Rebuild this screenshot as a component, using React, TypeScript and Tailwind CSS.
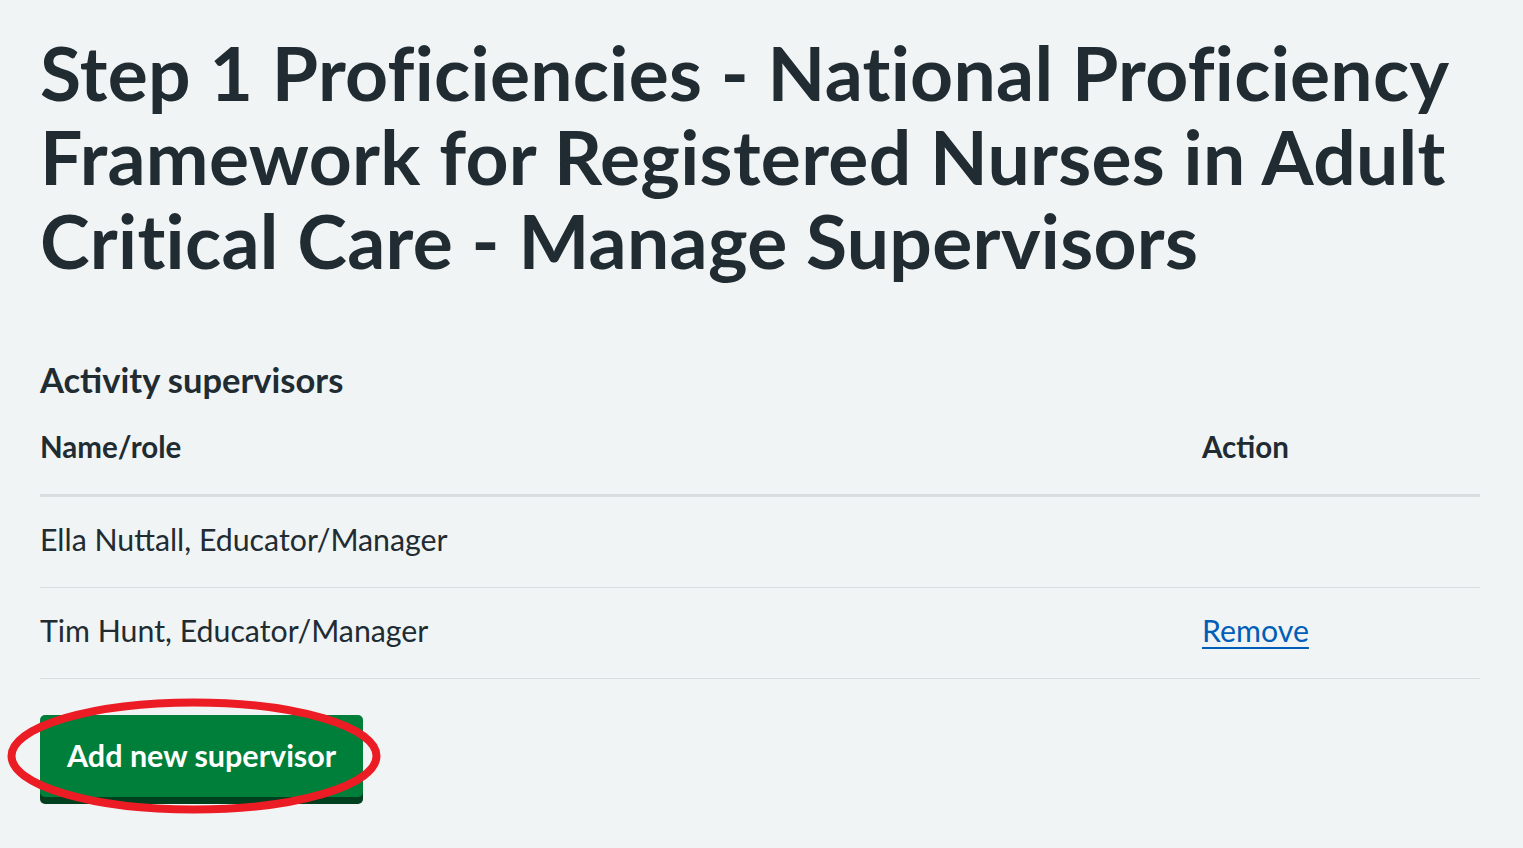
import React from "react";

export default function App() {
  return (
    <div className="min-h-screen w-full bg-[#f0f4f5] font-['Lato','Noto_Sans',sans-serif] text-[#212b32]">
      <div className="px-10 pt-[30px] pb-10 w-[1520px]">
        <h1 className="text-[75px] font-bold leading-[84px] tracking-[0.3px]">
          Step 1 Proficiencies - National Proficiency
          <br />
          Framework for Registered Nurses in Adult
          <br />
          Critical Care - Manage Supervisors
        </h1>

        <table className="mt-[77px] w-[1440px] table-fixed border-collapse text-left">
          <caption className="text-left text-[34.5px] font-bold leading-[42px]">
            Activity supervisors
          </caption>
          <colgroup>
            <col className="w-[1162px]" />
            <col />
          </colgroup>
          <thead>
            <tr className="border-b-[3px] border-[#d8dde0]">
              <th className="pt-[25px] pb-[26px] text-[29.5px] font-bold leading-[42px]">
                Name/role
              </th>
              <th className="pt-[25px] pb-[26px] text-[29.5px] font-bold leading-[42px]">
                Action
              </th>
            </tr>
          </thead>
          <tbody>
            <tr className="border-b border-[#d8dde0]">
              <td className="pt-[21px] pb-[27px] text-[30.3px] leading-[42px]">
                Ella Nuttall, Educator/Manager
              </td>
              <td className="pt-[21px] pb-[27px] text-[30.3px] leading-[42px]"></td>
            </tr>
            <tr className="border-b border-[#d8dde0]">
              <td className="pt-[21px] pb-[27px] text-[30.3px] leading-[42px]">
                Tim Hunt, Educator/Manager
              </td>
              <td className="pt-[21px] pb-[27px] text-[30.3px] leading-[42px]">
                <a
                  href="#"
                  className="text-[#005eb8] underline decoration-[2px] underline-offset-[5px]"
                >
                  Remove
                </a>
              </td>
            </tr>
          </tbody>
        </table>

        <div className="relative mt-[36px] inline-block">
          <button className="rounded-[5px] bg-[#007f3b] px-[27px] pt-[19px] pb-[21px] text-[30.5px] font-bold leading-[42px] text-white shadow-[0_7px_0_#00401e]">
            Add new supervisor
          </button>
          <svg
            className="pointer-events-none absolute left-[-33px] top-[-17px]"
            width="374"
            height="116"
            viewBox="0 0 374 116"
          >
            <ellipse
              cx="187"
              cy="58"
              rx="182.5"
              ry="53.5"
              fill="none"
              stroke="#ec1c24"
              strokeWidth="8"
            />
          </svg>
        </div>
      </div>
    </div>
  );
}
